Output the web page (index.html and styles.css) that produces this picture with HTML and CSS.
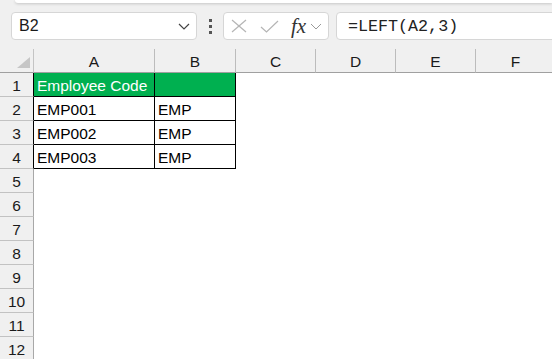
FILE: index.html
```html
<!DOCTYPE html>
<html lang="en">

<head>
  <meta charset="UTF-8" />
  <meta name="viewport" content="width=device-width, initial-scale=1.0" />
  <title>Sheet - LEFT formula</title>
  <link rel="stylesheet" href="styles.css">
</head>

<body>
  <div class="ribbon-edge"></div>

  <!-- Formula bar -->
  <div class="formula-bar">
    <div class="name-box">
      <span>B2</span>
      <svg class="chevron" width="12" height="7" viewBox="0 0 12 7">
        <polyline points="1,1 6,6 11,1" fill="none" stroke="#444" stroke-width="1.2" />
      </svg>
    </div>
    <div class="grip">
      <span></span><span></span><span></span>
    </div>
    <div class="fx-buttons">
      <svg class="cancel" width="16" height="14" viewBox="0 0 16 14">
        <line x1="1" y1="1" x2="15" y2="13" stroke="#b5b5b5" stroke-width="1.2" />
        <line x1="15" y1="1" x2="1" y2="13" stroke="#b5b5b5" stroke-width="1.2" />
      </svg>
      <svg class="enter" width="19" height="13" viewBox="0 0 19 13">
        <polyline points="1,7 6.5,12 18,1" fill="none" stroke="#b5b5b5" stroke-width="1.2" />
      </svg>
      <span class="fx">fx</span>
      <svg class="small-chevron" width="12" height="7" viewBox="0 0 12 7">
        <polyline points="1,1 6,6 11,1" fill="none" stroke="#999" stroke-width="1" />
      </svg>
    </div>
    <div class="formula-input">=LEFT(A2,3)</div>
  </div>

  <!-- Worksheet grid -->
  <div class="sheet">
    <div class="corner"><span class="triangle"></span></div>
    <div class="col-head">A</div>
    <div class="col-head">B</div>
    <div class="col-head">C</div>
    <div class="col-head">D</div>
    <div class="col-head">E</div>
    <div class="col-head">F</div>

    <div class="row-head edge">1</div>
    <div class="cell boxed green">Employee Code</div>
    <div class="cell boxed green"></div>
    <div class="cell"></div><div class="cell"></div><div class="cell"></div><div class="cell"></div>

    <div class="row-head edge">2</div>
    <div class="cell boxed">EMP001</div>
    <div class="cell boxed">EMP</div>
    <div class="cell"></div><div class="cell"></div><div class="cell"></div><div class="cell"></div>

    <div class="row-head edge">3</div>
    <div class="cell boxed">EMP002</div>
    <div class="cell boxed">EMP</div>
    <div class="cell"></div><div class="cell"></div><div class="cell"></div><div class="cell"></div>

    <div class="row-head edge">4</div>
    <div class="cell boxed">EMP003</div>
    <div class="cell boxed">EMP</div>
    <div class="cell"></div><div class="cell"></div><div class="cell"></div><div class="cell"></div>

    <div class="row-head">5</div>
    <div class="cell"></div><div class="cell"></div><div class="cell"></div><div class="cell"></div><div class="cell"></div><div class="cell"></div>
    <div class="row-head">6</div>
    <div class="cell"></div><div class="cell"></div><div class="cell"></div><div class="cell"></div><div class="cell"></div><div class="cell"></div>
    <div class="row-head">7</div>
    <div class="cell"></div><div class="cell"></div><div class="cell"></div><div class="cell"></div><div class="cell"></div><div class="cell"></div>
    <div class="row-head">8</div>
    <div class="cell"></div><div class="cell"></div><div class="cell"></div><div class="cell"></div><div class="cell"></div><div class="cell"></div>
    <div class="row-head">9</div>
    <div class="cell"></div><div class="cell"></div><div class="cell"></div><div class="cell"></div><div class="cell"></div><div class="cell"></div>
    <div class="row-head">10</div>
    <div class="cell"></div><div class="cell"></div><div class="cell"></div><div class="cell"></div><div class="cell"></div><div class="cell"></div>
    <div class="row-head">11</div>
    <div class="cell"></div><div class="cell"></div><div class="cell"></div><div class="cell"></div><div class="cell"></div><div class="cell"></div>
    <div class="row-head">12</div>
    <div class="cell"></div><div class="cell"></div><div class="cell"></div><div class="cell"></div><div class="cell"></div><div class="cell"></div>
  </div>
</body>

</html>
```

FILE: styles.css
```css
html,
body {
  overflow: hidden;
}

body {
  font-family: "Liberation Sans", Arial, sans-serif;
  margin: 0;
  padding: 0;
  background-color: #f0f0f0;
  color: #1a1a1a;
}

/* White ribbon edge at the very top */
.ribbon-edge {
  height: 3px;
  margin-left: 15px;
  background-color: #fff;
  border-bottom-left-radius: 6px;
  box-shadow: 0 1px 3px rgba(0, 0, 0, 0.18);
}

.formula-bar {
  display: flex;
  align-items: center;
  height: 28px;
  padding: 9px 0 9px 11px;
}

.name-box {
  box-sizing: border-box;
  width: 186px;
  height: 28px;
  display: flex;
  align-items: center;
  justify-content: space-between;
  padding: 0 6px 0 7px;
  background-color: #fff;
  border: 1px solid #d6d6d6;
  border-radius: 4px;
  font-size: 16px;
}

.grip {
  width: 26px;
  display: flex;
  flex-direction: column;
  align-items: center;
  gap: 3px;
}

.grip span {
  width: 3px;
  height: 3px;
  background-color: #555;
}

.fx-buttons {
  box-sizing: border-box;
  width: 106px;
  height: 28px;
  display: flex;
  align-items: center;
  padding-left: 7px;
  background-color: #fff;
  border: 1px solid #d6d6d6;
  border-radius: 4px;
}

.fx-buttons .enter {
  margin-left: 13px;
}

.fx {
  margin-left: 12px;
  font-family: "Liberation Serif", "Times New Roman", serif;
  font-style: italic;
  font-size: 21px;
  color: #333;
  line-height: 1;
}

.small-chevron {
  margin-left: 4px;
}

.formula-input {
  box-sizing: border-box;
  flex: 1;
  height: 28px;
  margin-left: 7px;
  margin-right: -10px;
  padding: 3px 0 0 11px;
  background-color: #fff;
  border: 1px solid #d6d6d6;
  border-radius: 4px;
  font-family: "Liberation Mono", "DejaVu Sans Mono", monospace;
  font-size: 16.7px;
  line-height: 21px;
  color: #222;
}

/* Grid */
.sheet {
  display: grid;
  grid-template-columns: 34px 121px 81px 80px 80px 80px 80px;
  grid-auto-rows: 24px;
  font-size: 15.5px;
}

.sheet > div {
  box-sizing: border-box;
  padding-top: 2px;
  line-height: 22px;
  white-space: nowrap;
  overflow: hidden;
}

.corner {
  display: flex;
  justify-content: flex-end;
  align-items: flex-end;
  padding: 0 3px 4px 0;
  border-right: 1px solid #c4c4c4;
  border-bottom: 1px solid #a0a0a0;
}

.triangle {
  width: 0;
  height: 0;
  border-left: 13px solid transparent;
  border-bottom: 11px solid #c6c6c6;
}

.col-head {
  text-align: center;
  border-right: 1px solid #bcbcbc;
  border-bottom: 1px solid #a0a0a0;
}

.row-head {
  text-align: center;
  border-right: 1px solid #a8a8a8;
  border-bottom: 1px solid #c2c2c2;
}

.row-head.edge {
  border-right-color: #000;
}

.cell {
  background-color: #fff;
  padding-left: 3px;
  color: #000;
}

.cell.boxed {
  border-right: 1px solid #000;
  border-bottom: 1px solid #000;
}

.cell.green {
  background-color: #00b050;
  color: #fff;
}
```
